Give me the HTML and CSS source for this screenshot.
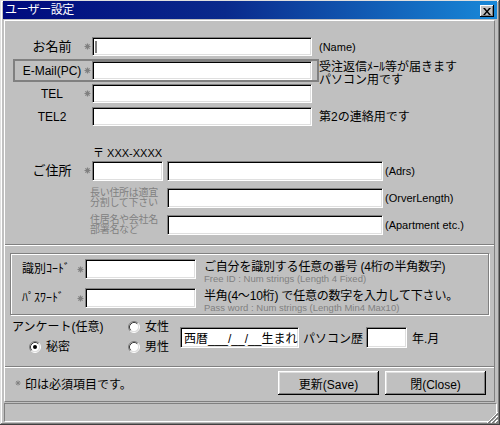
FILE: index.html
```html
<!DOCTYPE html>
<html lang="ja">
<head>
<meta charset="utf-8">
<title>ユーザー設定</title>
<link rel="stylesheet" href="styles.css">
</head>
<body>
<div class="window">
  <div class="titlebar">
    <span class="title">ユーザー設定</span>
    <span class="closebtn"><svg width="8" height="7" viewBox="0 0 8 7"><path d="M0 0h2l2 2.5L6 0h2L5 3.5 8 7H6L4 4.5 2 7H0l3-3.5z" fill="#000"/></svg></span>
  </div>
  <div class="client">
    <div class="main">
      <div class="row">
        <div class="box">
          <span class="label">お名前</span>
          <span class="ast"><svg width="7" height="7" viewBox="0 0 7 7"><path d="M3.5 0.5v6M0.5 3.5h6M1.4 1.4l4.2 4.2M5.6 1.4L1.4 5.6" stroke="#808080" stroke-width="1.2"/></svg></span>
          <div class="field w-std"><span class="caret"></span></div>
        </div>
        <span class="note latin">(Name)</span>
      </div>
      <div class="row row-gap">
        <div class="box focus">
          <span class="label lat">E-Mail(PC)</span>
          <span class="ast"><svg width="7" height="7" viewBox="0 0 7 7"><path d="M3.5 0.5v6M0.5 3.5h6M1.4 1.4l4.2 4.2M5.6 1.4L1.4 5.6" stroke="#808080" stroke-width="1.2"/></svg></span>
          <div class="field w-std"></div>
        </div>
        <span class="note two">受注返信ﾒｰﾙ等が届きます<br>パソコン用です</span>
      </div>
      <div class="row">
        <div class="box">
          <span class="label lat">TEL</span>
          <span class="ast"><svg width="7" height="7" viewBox="0 0 7 7"><path d="M3.5 0.5v6M0.5 3.5h6M1.4 1.4l4.2 4.2M5.6 1.4L1.4 5.6" stroke="#808080" stroke-width="1.2"/></svg></span>
          <div class="field w-std"></div>
        </div>
      </div>
      <div class="row">
        <div class="box">
          <span class="label lat">TEL2</span>
          <span class="ast"></span>
          <div class="field w-std"></div>
        </div>
        <span class="note">第2の連絡用です</span>
      </div>
      <div class="zipline">〒 XXX-XXXX</div>
      <div class="arow first">
        <span class="label">ご住所</span>
        <span class="ast"><svg width="7" height="7" viewBox="0 0 7 7"><path d="M3.5 0.5v6M0.5 3.5h6M1.4 1.4l4.2 4.2M5.6 1.4L1.4 5.6" stroke="#808080" stroke-width="1.2"/></svg></span>
        <div class="field w-zip"></div>
        <div class="field w-addr"></div>
        <span class="anote">(Adrs)</span>
      </div>
      <div class="arow">
        <span class="hint">長い住所は適宜<br>分割して下さい</span>
        <div class="field w-addr"></div>
        <span class="anote">(OrverLength)</span>
      </div>
      <div class="arow">
        <span class="hint">住居名や会社名<br>部署名など</span>
        <div class="field w-addr"></div>
        <span class="anote">(Apartment etc.)</span>
      </div>
    </div>
    <div class="sep"></div>
    <div class="groupbox">
      <div class="grow">
        <span class="glabel">識別ｺｰﾄﾞ</span>
        <span class="gast"><svg width="7" height="7" viewBox="0 0 7 7"><path d="M3.5 0.5v6M0.5 3.5h6M1.4 1.4l4.2 4.2M5.6 1.4L1.4 5.6" stroke="#808080" stroke-width="1.2"/></svg></span>
        <div class="field w-id"></div>
        <div class="desc">
          <div class="dmain">ご自分を識別する任意の番号 (4桁の半角数字)</div>
          <div class="dsub">Free ID : Num strings (Length 4 Fixed)</div>
        </div>
      </div>
      <div class="grow second">
        <span class="glabel">ﾊﾟｽﾜｰﾄﾞ</span>
        <span class="gast"><svg width="7" height="7" viewBox="0 0 7 7"><path d="M3.5 0.5v6M0.5 3.5h6M1.4 1.4l4.2 4.2M5.6 1.4L1.4 5.6" stroke="#808080" stroke-width="1.2"/></svg></span>
        <div class="field w-id"></div>
        <div class="desc">
          <div class="dmain">半角(4～10桁) で任意の数字を入力して下さい。</div>
          <div class="dsub">Pass word : Num strings (Length Min4 Max10)</div>
        </div>
      </div>
    </div>
    <div class="survey">
      <div class="scol1">
        <div class="sline">アンケート(任意)</div>
        <div class="sline radio-line indent">
          <svg class="radio" width="12" height="12" viewBox="0 0 12 12"><circle cx="6" cy="6" r="4.5" fill="#fff"/><path d="M9.89 2.11A5.5 5.5 0 0 0 2.11 9.89" stroke="#808080" fill="none"/><path d="M2.11 9.89A5.5 5.5 0 0 0 9.89 2.11" stroke="#fff" fill="none"/><path d="M9.18 2.82A4.5 4.5 0 0 0 2.82 9.18" stroke="#404040" fill="none"/><path d="M2.82 9.18A4.5 4.5 0 0 0 9.18 2.82" stroke="#dfdfdf" fill="none"/><circle cx="6" cy="6" r="2" fill="#000"/></svg>
          <span>秘密</span>
        </div>
      </div>
      <div class="scol2">
        <div class="sline radio-line">
          <svg class="radio" width="12" height="12" viewBox="0 0 12 12"><circle cx="6" cy="6" r="4.5" fill="#fff"/><path d="M9.89 2.11A5.5 5.5 0 0 0 2.11 9.89" stroke="#808080" fill="none"/><path d="M2.11 9.89A5.5 5.5 0 0 0 9.89 2.11" stroke="#fff" fill="none"/><path d="M9.18 2.82A4.5 4.5 0 0 0 2.82 9.18" stroke="#404040" fill="none"/><path d="M2.82 9.18A4.5 4.5 0 0 0 9.18 2.82" stroke="#dfdfdf" fill="none"/></svg>
          <span>女性</span>
        </div>
        <div class="sline radio-line">
          <svg class="radio" width="12" height="12" viewBox="0 0 12 12"><circle cx="6" cy="6" r="4.5" fill="#fff"/><path d="M9.89 2.11A5.5 5.5 0 0 0 2.11 9.89" stroke="#808080" fill="none"/><path d="M2.11 9.89A5.5 5.5 0 0 0 9.89 2.11" stroke="#fff" fill="none"/><path d="M9.18 2.82A4.5 4.5 0 0 0 2.82 9.18" stroke="#404040" fill="none"/><path d="M2.82 9.18A4.5 4.5 0 0 0 9.18 2.82" stroke="#dfdfdf" fill="none"/></svg>
          <span>男性</span>
        </div>
      </div>
      <div class="field bday">西暦___/__/__生まれ</div>
      <span class="pclabel">パソコン歴</span>
      <div class="field w-yr"></div>
      <span class="ym">年.月</span>
    </div>
    <div class="sep"></div>
    <div class="footer">
      <span class="req"><svg width="6" height="6" viewBox="0 0 6 6"><path d="M3 0.5v5M0.5 3h5M1.2 1.2l3.6 3.6M4.8 1.2L1.2 4.8" stroke="#808080" stroke-width="1"/></svg><span>印は必須項目です。</span></span>
      <span class="btns">
        <button class="btn" type="button">更新(Save)</button>
        <button class="btn" type="button">閉(Close)</button>
      </span>
    </div>
  </div>
  <div class="status">
    <svg class="grip" width="12" height="12" viewBox="0 0 12 12"><path d="M12 1L1 12M12 5L5 12M12 9L9 12" stroke="#fff"/><path d="M12 2L2 12M12 3L3 12M12 6L6 12M12 7L7 12M12 10L10 12M12 11L11 12" stroke="#808080"/></svg>
  </div>
</div>
</body>
</html>
```

FILE: styles.css
```css
* { box-sizing: border-box; }
html, body { margin: 0; padding: 0; }
body {
  width: 500px;
  height: 425px;
  overflow: hidden;
  background: #c0c0c0;
  font-family: "Liberation Sans", "Noto Sans CJK JP", sans-serif;
  font-size: 12px;
  color: #000;
}
.window {
  width: 500px;
  height: 425px;
  padding: 1px 3px 3px 3px;
  display: flex;
  flex-direction: column;
  background: #c0c0c0;
  box-shadow: inset -1px -1px #404040, inset 1px 1px #dfdfdf, inset -2px -2px #808080, inset 2px 2px #fff;
}
.titlebar {
  flex: none;
  height: 18px;
  display: flex;
  align-items: center;
  justify-content: space-between;
  padding: 0 3px 0 2px;
  background: linear-gradient(to right, #000a7e 0%, #0a2a8c 45%, #1888d8 100%);
  color: #fff;
}
.title { font-size: 12px; line-height: 14px; letter-spacing: -0.5px; }
.closebtn {
  width: 14px;
  height: 12px;
  margin-top: 2px;
  background: #c0c0c0;
  box-shadow: inset -1px -1px #000, inset 1px 1px #fff, inset -2px -2px #808080;
  display: flex;
  align-items: center;
  justify-content: center;
}
.client {
  flex: none;
  height: 382px;
  margin: 1px 2px 0 1px;
  border-top: 1px solid #fff;
  border-left: 1px solid #fff;
  border-right: 1px solid #808080;
  border-bottom: 1px solid #808080;
  display: flex;
  flex-direction: column;
}
.main { flex: none; height: 223px; padding-top: 14px; }
.sep { flex: none; height: 2px; border-top: 1px solid #808080; border-bottom: 1px solid #fff; }

.row { display: flex; align-items: center; height: 23px; }
.row-gap { margin-top: 1px; }
.box {
  display: flex;
  align-items: center;
  margin-left: 8px;
  border: 2px solid transparent;
  padding: 0 5px;
}
.box.focus { border-color: #808080; }
.label { flex: none; width: 64px; text-align: center; font-size: 13px; line-height: 16px; white-space: nowrap; }
.label.lat { font-size: 12px; }
.ast { flex: none; width: 8px; display: flex; align-items: center; justify-content: flex-start; margin-top: -1px; }
.ast svg { display: block; }
.field {
  flex: none;
  height: 19px;
  background: #fff;
  border: 1px solid;
  border-color: #808080 #fff #fff #808080;
  box-shadow: inset 1px 1px #000, inset -1px -1px #dfdfdf;
  display: flex;
  align-items: center;
}
.w-std { width: 220px; }
.caret { width: 2px; height: 12px; margin-left: 2px; background: #808080; }
.note { font-size: 12px; line-height: 12px; white-space: nowrap; }
.note.latin { font-size: 11px; }
.note.two { align-self: flex-start; margin-top: 2px; line-height: 13px; }

.zipline { margin: 19px 0 0 88px; font-size: 11px; line-height: 12px; }
.arow { display: flex; align-items: center; height: 20px; margin-top: 7px; padding-left: 15px; }
.arow.first { margin-top: 2px; }
.arow .field { height: 20px; }
.w-zip { width: 71px; margin-right: 4px; }
.w-addr { width: 216px; }
.anote { margin-left: 2px; font-size: 11px; line-height: 12px; white-space: nowrap; }
.hint {
  flex: none;
  width: 77px;
  margin-left: 70px;
  font-size: 10px;
  line-height: 10px;
  color: #808080;
  white-space: nowrap;
  letter-spacing: -0.3px;
}

.groupbox {
  flex: none;
  height: 62px;
  margin: 7px 5px 0 5px;
  border: 1px solid #808080;
  box-shadow: 1px 1px 0 #fff, inset 1px 1px 0 #fff;
  padding: 5px 0 0 11px;
}
.grow { display: flex; align-items: center; height: 20px; }
.grow.second { margin-top: 9px; }
.glabel { flex: none; width: 53px; font-size: 12px; line-height: 14px; }
.gast { flex: none; width: 10px; display: flex; justify-content: center; }
.gast svg { display: block; }
.w-id { width: 111px; height: 20px; }
.desc { align-self: flex-start; margin: 1px 0 0 8px; white-space: nowrap; }
.dmain { font-size: 12px; line-height: 14px; letter-spacing: -0.2px; }
.dsub { font-size: 9.5px; line-height: 9px; color: #808080; }

.survey { flex: none; display: flex; align-items: center; height: 40px; margin-top: 2px; margin-bottom: 9px; padding-left: 7px; }
.scol1 { flex: none; width: 116px; }
.scol2 { flex: none; width: 52px; }
.sline { height: 20px; line-height: 20px; font-size: 12px; white-space: nowrap; }
.radio-line { display: flex; align-items: center; }
.radio-line .radio { flex: none; margin-right: 5px; display: block; }
.indent { padding-left: 17px; }
.bday { width: 119px; height: 21px; padding-left: 3px; font-size: 12px; white-space: nowrap; overflow: hidden; }
.pclabel { margin-left: 4px; width: 63px; font-size: 12px; white-space: nowrap; }
.w-yr { width: 41px; height: 21px; }
.ym { margin-left: 5px; font-size: 12px; }

.footer { flex: 1; display: flex; align-items: flex-start; justify-content: space-between; padding: 3px 8px 0 10px; }
.req { display: flex; align-items: center; height: 24px; font-size: 12px; }
.req svg { display: block; margin-right: 4px; }
.btns { display: flex; gap: 6px; }
.btn {
  width: 101px;
  height: 24px;
  padding: 0;
  border: none;
  background: #c0c0c0;
  font-family: "Liberation Sans", "Noto Sans CJK JP", sans-serif;
  font-size: 12px;
  color: #000;
  box-shadow: inset -1px -1px #000, inset 1px 1px #fff, inset -2px -2px #808080, inset 2px 2px #dfdfdf;
}

.status {
  flex: 1;
  position: relative;
  margin: 1px 0 0 1px;
  border: 1px solid;
  border-color: #808080 #fff #fff #808080;
}
.grip { position: absolute; right: -2px; bottom: -2px; display: block; }
```
